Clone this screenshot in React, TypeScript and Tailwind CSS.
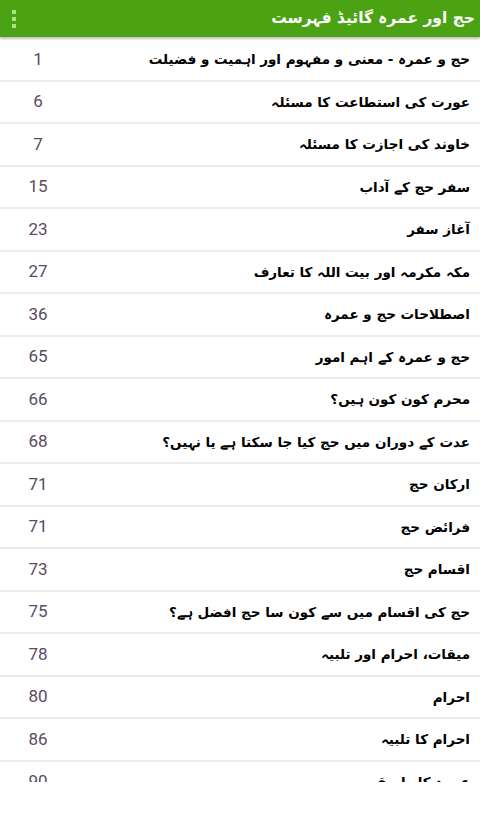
const chapters: [string, number][] = [
  ["حج و عمرہ - معنی و مفہوم اور اہمیت و فضیلت", 1],
  ["عورت کی استطاعت کا مسئلہ", 6],
  ["خاوند کی اجازت کا مسئلہ", 7],
  ["سفر حج کے آداب", 15],
  ["آغاز سفر", 23],
  ["مکہ مکرمہ اور بیت اللہ کا تعارف", 27],
  ["اصطلاحات حج و عمرہ", 36],
  ["حج و عمرہ کے اہم امور", 65],
  ["محرم کون کون ہیں؟", 66],
  ["عدت کے دوران میں حج کیا جا سکتا ہے یا نہیں؟", 68],
  ["ارکان حج", 71],
  ["فرائض حج", 71],
  ["اقسام حج", 73],
  ["حج کی اقسام میں سے کون سا حج افضل ہے؟", 75],
  ["میقات، احرام اور تلبیہ", 78],
  ["احرام", 80],
  ["احرام کا تلبیہ", 86],
  ["عمرہ کا طریقہ", 90],
];

function MenuDots() {
  return (
    <div className="flex flex-col gap-[3px] px-3">
      <span className="block w-[4px] h-[4px] bg-[#a8e37e]" />
      <span className="block w-[4px] h-[4px] bg-[#a8e37e]" />
      <span className="block w-[4px] h-[4px] bg-[#a8e37e]" />
    </div>
  );
}

export default function App() {
  return (
    <div className="w-[480px] h-[820px] bg-white flex flex-col">
      {/* Toolbar */}
      <header className="h-[37px] bg-[#4ba313] flex items-center justify-between shadow-[0_2px_2px_rgba(0,0,0,0.25)] relative z-10">
        <MenuDots />
        <h1
          dir="rtl"
          className="pr-[5px] text-white font-bold text-[15.5px] font-['DejaVu_Sans',sans-serif]"
        >
          حج اور عمرہ گائیڈ فہرست
        </h1>
      </header>

      {/* List */}
      <div className="mt-[2px] h-[743px] overflow-hidden">
        {chapters.map(([title, page], i) => (
          <div
            key={i}
            className="h-[42.5px] flex items-center justify-between border-b-2 border-[#ececec]"
          >
            <span className="w-[76px] text-center text-[17px] text-[#5b4a60] font-['Roboto',sans-serif]">
              {page}
            </span>
            <span
              dir="rtl"
              className="pr-[10px] text-[13.5px] font-bold text-black font-['DejaVu_Sans',sans-serif]"
            >
              {title}
            </span>
          </div>
        ))}
      </div>
    </div>
  );
}
